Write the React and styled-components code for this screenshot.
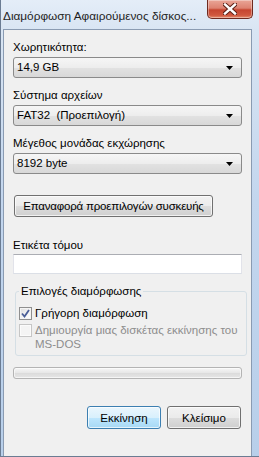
import React from "react";
import styled, { createGlobalStyle } from "styled-components";

const GlobalStyle = createGlobalStyle`
  html, body {
    margin: 0;
    padding: 0;
  }
  body {
    width: 259px;
    height: 457px;
    overflow: hidden;
    font-family: "Liberation Sans", "DejaVu Sans", sans-serif;
    font-size: 11.5px;
    color: #000;
  }
`;

const Window = styled.div`
  width: 259px;
  height: 457px;
  box-sizing: border-box;
  display: flex;
  flex-direction: column;
  border-left: 1px solid #6b7c93;
  border-bottom: 1px solid #6b7c93;
  background: linear-gradient(to bottom, #e4edf8 0px, #d9e5f3 30px, #c3d6ee 200px, #b8cfea 100%);
`;

const TitleBar = styled.div`
  height: 29px;
  flex: none;
  display: flex;
  align-items: flex-start;
  padding-left: 2px;
`;

const Title = styled.div`
  margin-top: 8px;
  line-height: 16px;
  font-size: 11.8px;
  white-space: nowrap;
  color: #1e1e1e;
`;

const CloseButton = styled.div`
  margin-left: auto;
  margin-right: 6px;
  width: 46px;
  height: 19px;
  box-sizing: border-box;
  display: flex;
  align-items: center;
  justify-content: center;
  border: 1px solid #6e2a20;
  border-top: none;
  border-radius: 0 0 5px 5px;
  background: linear-gradient(to bottom, #e9a597 0%, #dd8271 45%, #c64530 55%, #d0583f 85%, #e58f6f 100%);
  box-shadow: inset 0 0 0 1px rgba(255, 255, 255, 0.35);
`;

const Panel = styled.div`
  flex: 1;
  margin: 0 7px 0 2px;
  box-sizing: border-box;
  background: #f0f0f0;
  border: 1px solid #8a9bb2;
  border-bottom: none;
  padding: 10px 9px 0 9px;
  display: flex;
  flex-direction: column;
`;

const Label = styled.div`
  line-height: 15px;
  margin-top: ${(p) => p.$gap || 0}px;
  white-space: nowrap;
`;

const Combo = styled.div`
  margin-top: 2px;
  height: 21px;
  box-sizing: border-box;
  display: flex;
  align-items: center;
  padding: 0 8px 0 3px;
  border: 1px solid #8a8a8a;
  border-radius: 3px;
  background: linear-gradient(to bottom, #f6f6f6 0%, #ededed 50%, #e2e2e2 51%, #d8d8d8 100%);
`;

const ComboText = styled.span`
  flex: 1;
  line-height: 15px;
  white-space: pre;
`;

const Button = styled.div`
  height: ${(p) => p.$h || 22}px;
  width: ${(p) => p.$w}px;
  box-sizing: border-box;
  display: flex;
  align-items: center;
  justify-content: center;
  border: 1px solid ${(p) => (p.$primary ? "#3c7fb1" : "#707070")};
  border-radius: 3px;
  background: ${(p) =>
    p.$primary
      ? "linear-gradient(to bottom, #eaf6fd 0%, #d9f0fc 50%, #bee6fd 51%, #a7d9f5 100%)"
      : "linear-gradient(to bottom, #f2f2f2 0%, #ebebeb 50%, #dddddd 51%, #cfcfcf 100%)"};
  box-shadow: inset 0 0 0 1px rgba(255, 255, 255, 0.7);
  white-space: nowrap;
`;

const ResetButton = styled(Button)`
  margin-top: 21px;
  margin-left: 1px;
  letter-spacing: -0.2px;
`;

const TextBox = styled.div`
  margin-top: 1px;
  height: 20px;
  box-sizing: border-box;
  background: #fff;
  border: 1px solid #dbdfe6;
  border-top-color: #abadb3;
  border-left-color: #e2e3ea;
  border-right-color: #e2e3ea;
`;

const Group = styled.fieldset`
  margin: 10px -5px 0 2px;
  padding: 7px 4px 4px 3px;
  border: 1px solid #d5dfe5;
  border-radius: 3px;
  min-width: 0;
`;

const Legend = styled.legend`
  padding: 0 2px;
  line-height: 15px;
`;

const CheckRow = styled.div`
  display: flex;
  align-items: flex-start;
  color: ${(p) => (p.$disabled ? "#8d8d8d" : "#000")};
  line-height: ${(p) => (p.$disabled ? 14 : 15)}px;
  margin-top: ${(p) => (p.$disabled ? 2 : 0)}px;
  white-space: nowrap;
`;

const Box = styled.div`
  flex: none;
  width: 13px;
  height: 13px;
  box-sizing: border-box;
  margin: 1px 3px 0 0;
  border: 1px solid ${(p) => (p.$disabled ? "#c6c6c6" : "#8f8f8f")};
  background: ${(p) =>
    p.$disabled ? "#f4f4f4" : "linear-gradient(135deg, #dcdcdc 0%, #f5f5f5 60%, #ffffff 100%)"};
  box-shadow: inset 0 0 0 1px ${(p) => (p.$disabled ? "#fbfbfb" : "#f4f4f4")};
  display: flex;
  align-items: center;
  justify-content: center;
`;

const Progress = styled.div`
  margin-top: 11px;
  height: 12px;
  box-sizing: border-box;
  border: 1px solid #b4b4b4;
  border-radius: 3px;
  background: linear-gradient(to bottom, #f7f7f7 0%, #e8e8e8 45%, #dcdcdc 55%, #e6e6e6 100%);
  box-shadow: inset 0 0 0 1px rgba(255, 255, 255, 0.6);
`;

const Footer = styled.div`
  margin-top: 27px;
  margin-right: 1px;
  display: flex;
  justify-content: flex-end;
  gap: 6px;
`;

const Arrow = () => (
  <svg width="7" height="4" viewBox="0 0 7 4">
    <polygon points="0,0 7,0 3.5,4" fill="#000" />
  </svg>
);

const CloseX = () => (
  <svg width="14" height="12" viewBox="0 0 14 12">
    <path d="M2 1.5 L12 10.5 M12 1.5 L2 10.5" stroke="#5b1f15" strokeWidth="4.4" strokeLinecap="square" />
    <path d="M2 1.5 L12 10.5 M12 1.5 L2 10.5" stroke="#fff" strokeWidth="2.4" strokeLinecap="square" />
  </svg>
);

const Check = () => (
  <svg width="9" height="9" viewBox="0 0 9 9">
    <path d="M1 4.5 L3.5 7.5 L8 1" stroke="#4a5e97" strokeWidth="1.8" fill="none" />
  </svg>
);

const ComboBox = ({ value }) => (
  <Combo>
    <ComboText>{value}</ComboText>
    <Arrow />
  </Combo>
);

export default function App() {
  return (
    <>
      <GlobalStyle />
      <Window>
        <TitleBar>
          <Title>Διαμόρφωση Αφαιρούμενος δίσκος...</Title>
          <CloseButton>
            <CloseX />
          </CloseButton>
        </TitleBar>
        <Panel>
          <Label>Χωρητικότητα:</Label>
          <ComboBox value="14,9 GB" />
          <Label $gap={10}>Σύστημα αρχείων</Label>
          <ComboBox value="FAT32  (Προεπιλογή)" />
          <Label $gap={10}>Μέγεθος μονάδας εκχώρησης</Label>
          <ComboBox value="8192 byte" />
          <ResetButton $w={199}>Επαναφορά προεπιλογών συσκευής</ResetButton>
          <Label $gap={21}>Ετικέτα τόμου</Label>
          <TextBox />
          <Group>
            <Legend>Επιλογές διαμόρφωσης</Legend>
            <CheckRow>
              <Box>
                <Check />
              </Box>
              <span>Γρήγορη διαμόρφωση</span>
            </CheckRow>
            <CheckRow $disabled>
              <Box $disabled />
              <span>
                Δημιουργία μιας δισκέτας εκκίνησης του
                <br />
                MS-DOS
              </span>
            </CheckRow>
          </Group>
          <Progress />
          <Footer>
            <Button $primary $w={74} $h={23}>
              Εκκίνηση
            </Button>
            <Button $w={74} $h={23}>
              Κλείσιμο
            </Button>
          </Footer>
        </Panel>
      </Window>
    </>
  );
}
